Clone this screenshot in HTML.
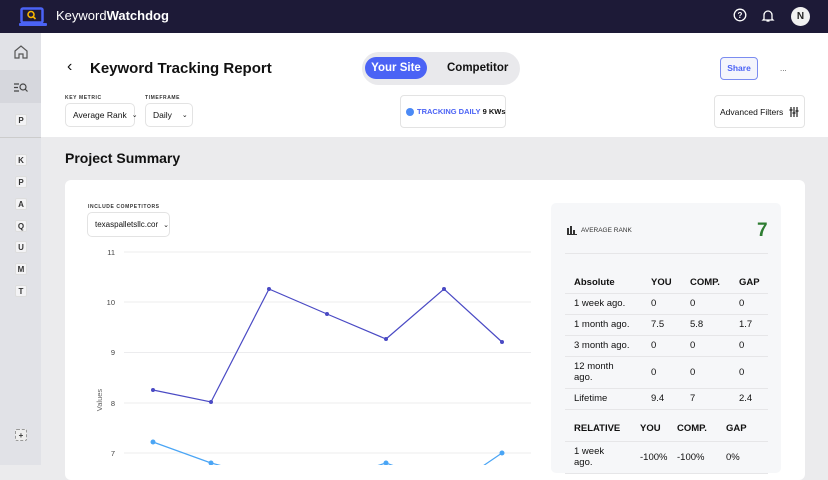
<!DOCTYPE html>
<html><head><meta charset="utf-8"><style>
*{box-sizing:border-box;margin:0;padding:0}
body{width:828px;height:465px;overflow:hidden;font-family:"Liberation Sans",sans-serif;background:#ebebed;position:relative;color:#111}
.top{position:absolute;left:0;top:0;width:828px;height:33px;background:#1d1a37}
.side{position:absolute;left:0;top:33px;width:41px;height:432px;background:#e1e2e7}
.hdr{position:absolute;left:41px;top:33px;width:787px;height:104px;background:#fff}
.abs{position:absolute;white-space:nowrap}
.lbl{font-size:5px;font-weight:bold;letter-spacing:.6px;color:#333}
.sel{border:1px solid #e3e3e3;border-radius:5px;background:#fff;font-size:8.5px;display:flex;align-items:center;padding-left:7px;white-space:nowrap}
.sq{position:absolute;left:15px;width:12px;height:12px;background:#f3f3f5;border:1px solid #ddd;border-radius:2px;font-size:8px;font-weight:bold;text-align:center;line-height:11px;color:#333}
table{border-collapse:collapse;font-size:9.5px}
td{border-bottom:1px solid #e6e6e8;height:21px;vertical-align:middle}
</style></head><body>
<div class="top">
 <svg class="abs" style="left:19px;top:7px" width="28" height="19"><rect x="2.5" y="1.5" width="21" height="14" rx="1.5" fill="#1d1a37" stroke="#4b63f5" stroke-width="2.5"/><rect x="0" y="16" width="28" height="3" rx="1" fill="#4b63f5"/><circle cx="12" cy="7.5" r="3" fill="none" stroke="#f5b400" stroke-width="1.6"/><line x1="14" y1="9.5" x2="16.5" y2="12" stroke="#f5b400" stroke-width="1.6"/></svg>
 <div class="abs" style="left:56px;top:8px;color:#fff;font-size:13px">Keyword<b>Watchdog</b></div>
 <svg class="abs" style="left:733px;top:8px" width="14" height="14"><circle cx="7" cy="7" r="5.8" fill="none" stroke="#fff" stroke-width="1.3"/><text x="7" y="10" font-size="8" font-weight="bold" fill="#fff" text-anchor="middle" font-family="Liberation Sans">?</text></svg>
 <svg class="abs" style="left:761px;top:8px" width="14" height="15"><path d="M3 11V7a4 4 0 0 1 8 0v4l1 1H2z" fill="none" stroke="#fff" stroke-width="1.3"/><path d="M5.5 13h3" stroke="#fff" stroke-width="1.3"/></svg>
 <div class="abs" style="left:791px;top:7px;width:19px;height:19px;border-radius:50%;background:#f1f1f1;font-size:10px;font-weight:bold;text-align:center;line-height:19px;color:#222">N</div>
</div>
<div class="side">
 <svg class="abs" style="left:13px;top:11px" width="16" height="16"><path d="M2 7L8 2l6 5v7H10v-4H6v4H2z" fill="none" stroke="#555" stroke-width="1.2"/></svg>
 <div class="abs" style="left:0;top:37px;width:41px;height:33px;background:#d6d7dd"></div>
 <svg class="abs" style="left:13px;top:49px" width="16" height="12"><path d="M1 2h5M1 5.5h4M1 9h5" stroke="#444" stroke-width="1.2"/><circle cx="10" cy="5" r="3" fill="none" stroke="#444" stroke-width="1.2"/><line x1="12" y1="7" x2="14.5" y2="9.5" stroke="#444" stroke-width="1.2"/></svg>
 <div class="sq" style="top:81px">P</div>
 <div class="abs" style="left:0;top:104px;width:41px;height:1px;background:#ccc"></div>
 <div class="sq" style="top:121px">K</div>
 <div class="sq" style="top:143px">P</div>
 <div class="sq" style="top:165px">A</div>
 <div class="sq" style="top:187px">Q</div>
 <div class="sq" style="top:208px">U</div>
 <div class="sq" style="top:230px">M</div>
 <div class="sq" style="top:252px">T</div>
 <div class="sq" style="top:396px;border:1px dashed #999;background:#eee">+</div>
</div>
<div class="hdr"></div>
<div class="abs" style="left:67px;top:58px;font-size:16px">‹</div>
<div class="abs" style="left:90px;top:60px;font-size:15px;font-weight:bold">Keyword Tracking Report</div>
<div class="abs" style="left:362px;top:52px;width:158px;height:33px;border-radius:17px;background:#e9e9ec"></div>
<div class="abs" style="left:365px;top:57px;width:62px;height:22px;border-radius:11px;background:#4b63f5;color:#fff;font-size:11.5px;font-weight:bold;text-align:center;line-height:22px">Your Site</div>
<div class="abs" style="left:447px;top:62px;font-size:11.5px;font-weight:bold">Competitor</div>
<div class="abs" style="left:720px;top:57px;width:38px;height:23px;border:1.5px solid #7b8cf0;border-radius:4px;background:#f4f5fc;color:#4b63f5;font-size:8.5px;font-weight:bold;text-align:center;line-height:20px">Share</div>
<div class="abs" style="left:780px;top:64px;font-size:8px;color:#555">...</div>
<div class="abs lbl" style="left:65px;top:95px">KEY METRIC</div>
<div class="abs lbl" style="left:145px;top:95px">TIMEFRAME</div>
<div class="abs sel" style="left:65px;top:103px;width:70px;height:24px">Average Rank <span style="margin-left:5px;font-size:7px">⌄</span></div>
<div class="abs sel" style="left:145px;top:103px;width:48px;height:24px">Daily <span style="margin-left:10px;font-size:7px">⌄</span></div>
<div class="abs" style="left:400px;top:95px;width:106px;height:33px;border:1px solid #e3e3e3;border-radius:4px;font-size:7.5px;font-weight:bold;display:flex;align-items:center;padding-left:5px"><span style="width:8px;height:8px;border-radius:50%;background:#4b8af5;margin-right:3px;flex:none"></span><span style="color:#4b63f5">TRACKING DAILY</span>&nbsp;9 KWs</div>
<div class="abs" style="left:714px;top:95px;width:91px;height:33px;border:1px solid #e3e3e3;border-radius:4px;font-size:8.5px;display:flex;align-items:center;padding-left:5px">Advanced Filters <svg style="margin-left:6px" width="10" height="10"><path d="M2 0v10M5 0v10M8 0v10" stroke="#333" stroke-width="1.3"/><path d="M0.5 3h3M3.5 6h3M6.5 4h3" stroke="#333" stroke-width="1.6"/></svg></div>
<div class="abs" style="left:65px;top:150px;font-size:14px;font-weight:bold">Project Summary</div>
<div class="abs" style="left:65px;top:180px;width:740px;height:300px;background:#fff;border-radius:6px"></div>
<div class="abs lbl" style="left:88px;top:204px">INCLUDE COMPETITORS</div>
<div class="abs sel" style="left:87px;top:212px;width:83px;height:25px;font-size:8px;padding-left:7px">texaspalletsllc.cor <span style="margin-left:5px;font-size:7px">⌄</span></div>
<svg class="abs" style="left:60px;top:240px" width="480" height="225" font-family="Liberation Sans">
 <g stroke="#ececee" stroke-width="1"><line x1="64" y1="12" x2="471" y2="12"/><line x1="64" y1="62" x2="471" y2="62"/><line x1="64" y1="112.5" x2="471" y2="112.5"/><line x1="64" y1="163" x2="471" y2="163"/><line x1="64" y1="213" x2="471" y2="213"/></g>
 <g font-size="7.5" fill="#444" text-anchor="end"><text x="55" y="15">11</text><text x="55" y="65">10</text><text x="55" y="115">9</text><text x="55" y="166">8</text><text x="55" y="216">7</text></g>
 <text x="42" y="160" font-size="7.5" fill="#666" transform="rotate(-90 42 160)" text-anchor="middle">Values</text>
 <polyline fill="none" stroke="#4a4ac4" stroke-width="1.2" points="93,150 151,162 209,49 267,74 326,99 384,49 442,102"/>
 <g fill="#4a4ac4"><circle cx="93" cy="150" r="2"/><circle cx="151" cy="162" r="2"/><circle cx="209" cy="49" r="2"/><circle cx="267" cy="74" r="2"/><circle cx="326" cy="99" r="2"/><circle cx="384" cy="49" r="2"/><circle cx="442" cy="102" r="2"/></g>
 <polyline fill="none" stroke="#4aa5f5" stroke-width="1.2" points="93,202 151,223 170,228 310,228 326,223 340,228 420,228 442,213"/>
 <g fill="#4aa5f5"><circle cx="93" cy="202" r="2.5"/><circle cx="151" cy="223" r="2.5"/><circle cx="326" cy="223" r="2.5"/><circle cx="442" cy="213" r="2.5"/></g>
</svg>
<div class="abs" style="left:551px;top:203px;width:230px;height:270px;background:#f6f7f9;border-radius:5px"></div>
<svg class="abs" style="left:567px;top:226px" width="10" height="9"><rect x="0" y="2" width="2" height="7" fill="#333"/><rect x="3" y="0" width="2" height="9" fill="#333"/><rect x="6" y="4" width="2" height="5" fill="#333"/><rect x="0" y="8" width="10" height="1" fill="#333"/></svg>
<div class="abs" style="left:581px;top:227px;font-size:6.5px;color:#333">AVERAGE RANK</div>
<div class="abs" style="left:757px;top:220px;font-size:19px;font-weight:bold;color:#2e7d32">7</div>
<div class="abs" style="left:565px;top:253px;width:203px;height:1px;background:#e6e6e8"></div>
<table class="abs" style="left:565px;top:272px;width:203px">
<tr style="font-weight:bold"><td style="width:86px;padding-left:9px">Absolute</td><td style="width:39px">YOU</td><td style="width:49px">COMP.</td><td>GAP</td></tr>
<tr><td style="padding-left:9px">1 week ago.</td><td>0</td><td>0</td><td>0</td></tr>
<tr><td style="padding-left:9px">1 month ago.</td><td>7.5</td><td>5.8</td><td>1.7</td></tr>
<tr><td style="padding-left:9px">3 month ago.</td><td>0</td><td>0</td><td>0</td></tr>
<tr><td style="padding-left:9px;height:32px;white-space:normal">12 month<br>ago.</td><td>0</td><td>0</td><td>0</td></tr>
<tr><td style="padding-left:9px">Lifetime</td><td>9.4</td><td>7</td><td>2.4</td></tr>
</table>
<table class="abs" style="left:565px;top:417px;width:203px">
<tr style="font-weight:bold"><td style="width:75px;padding-left:9px;height:24px">RELATIVE</td><td style="width:37px">YOU</td><td style="width:49px">COMP.</td><td>GAP</td></tr>
<tr><td style="padding-left:9px;height:32px">1 week<br>ago.</td><td>-100%</td><td>-100%</td><td>0%</td></tr>
</table>
</body></html>
